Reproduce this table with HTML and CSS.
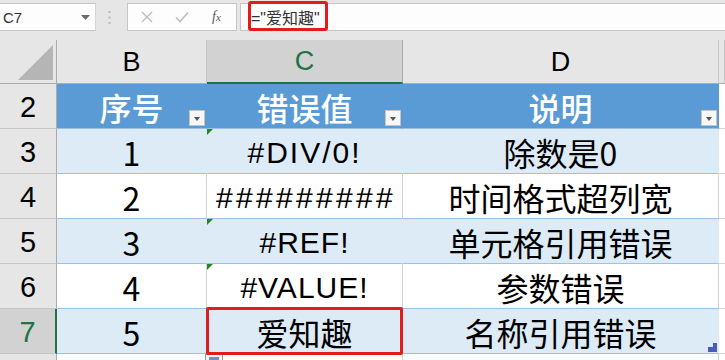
FILE: index.html
```html
<!DOCTYPE html>
<html lang="zh">
<head>
<meta charset="utf-8">
<link rel="stylesheet" href="styles.css">
</head>
<body>
<div class="app">
  <div class="fbar">
    <div class="namebox">
      <span class="nb-text">C7</span>
      <svg class="nb-arrow" width="9" height="5" viewBox="0 0 9 5"><path d="M0 0H9L4.5 5Z" fill="#6b6b6b"/></svg>
    </div>
    <div class="fb-dots">
      <svg width="3" height="13" viewBox="0 0 3 13"><rect x="0.5" y="0" width="2" height="2" fill="#b8b8b8"/><rect x="0.5" y="5.5" width="2" height="2" fill="#b8b8b8"/><rect x="0.5" y="11" width="2" height="2" fill="#b8b8b8"/></svg>
    </div>
    <div class="fxbox">
      <svg class="fx-icon" width="12" height="12" viewBox="0 0 12 12"><path d="M1 1L11 11M11 1L1 11" stroke="#bdbdbd" stroke-width="1.4" fill="none"/></svg>
      <svg class="fx-icon" width="14" height="12" viewBox="0 0 14 12"><path d="M1 6.5L5 10.5L13 1.5" stroke="#bdbdbd" stroke-width="1.6" fill="none"/></svg>
      <span class="fx-text">f<span class="fx-sub">x</span></span>
    </div>
    <div class="finput">
      <span class="formula">="爱知趣"</span>
      <div class="mark-formula"></div>
    </div>
  </div>

  <div class="sheet">
    <!-- column header row -->
    <div class="ch corner"><div class="corner-tri"></div></div>
    <div class="ch">B</div>
    <div class="ch sel">C</div>
    <div class="ch">D</div>
    <div class="ch"></div>

    <!-- row 2 -->
    <div class="rh">2</div>
    <div class="th">序号<span class="dd"></span></div>
    <div class="th">错误值<span class="dd"></span></div>
    <div class="th">说明<span class="dd"></span></div>
    <div class="ec ec-top"></div>

    <!-- row 3 -->
    <div class="rh">3</div>
    <div class="td band">1</div>
    <div class="td band latin wide">#DIV/0!<span class="err"></span></div>
    <div class="td band">除数是0</div>
    <div class="ec"></div>

    <!-- row 4 -->
    <div class="rh">4</div>
    <div class="td">2</div>
    <div class="td latin hashes">#########</div>
    <div class="td">时间格式超列宽</div>
    <div class="ec"></div>

    <!-- row 5 -->
    <div class="rh">5</div>
    <div class="td band">3</div>
    <div class="td band latin">#REF!<span class="err"></span></div>
    <div class="td band">单元格引用错误</div>
    <div class="ec"></div>

    <!-- row 6 -->
    <div class="rh">6</div>
    <div class="td">4</div>
    <div class="td latin">#VALUE!<span class="err"></span></div>
    <div class="td">参数错误</div>
    <div class="ec"></div>

    <!-- row 7 -->
    <div class="rh sel">7</div>
    <div class="td band">5</div>
    <div class="td band">爱知趣</div>
    <div class="td band">名称引用错误<span class="resize"></span></div>
    <div class="ec"></div>

    <!-- row 8 -->
    <div class="rh"></div>
    <div class="td"></div>
    <div class="td"><span class="qa"></span></div>
    <div class="td"></div>
    <div class="ec"></div>

    <div class="mark-cell"></div>
  </div>
</div>
</body>
</html>
```

FILE: styles.css
```css
* { box-sizing: border-box; }

html, body {
  margin: 0;
  padding: 0;
}

body {
  width: 725px;
  height: 360px;
  overflow: hidden;
  background: #e6e6e6;
  font-family: "Liberation Sans", "Noto Sans CJK SC", sans-serif;
  color: #000;
}

.app {
  display: flex;
  flex-direction: column;
}

/* ---------- formula bar ---------- */
.fbar {
  display: flex;
  height: 31px;
  padding-top: 3px;
  margin-bottom: 9px;
}

.namebox {
  width: 96px;
  height: 28px;
  background: #fdfdfd;
  border-top: 1px solid #c6c6c6;
  border-bottom: 1px solid #c6c6c6;
  border-right: 1px solid #d6d6d6;
  display: flex;
  align-items: center;
  justify-content: space-between;
  padding: 0 5px 0 3px;
}

.nb-text {
  font-family: "Liberation Sans", sans-serif;
  font-size: 15px;
  color: #333;
}

.fb-dots {
  width: 31px;
  height: 28px;
  display: flex;
  align-items: center;
  justify-content: center;
  padding-right: 4px;
}

.fxbox {
  width: 110px;
  height: 28px;
  background: #fdfdfd;
  border: 1px solid #c6c6c6;
  display: flex;
  align-items: center;
  padding-left: 13px;
  gap: 22px;
}

.fx-text {
  font-family: "Liberation Serif", serif;
  font-style: italic;
  font-size: 14px;
  color: #5a5a5a;
  margin-left: 1px;
}

.fx-sub {
  font-size: 11px;
}

.finput {
  position: relative;
  flex: 1;
  margin-left: 3px;
  height: 28px;
  background: #fdfdfd;
  border-top: 1px solid #c6c6c6;
  border-bottom: 1px solid #c6c6c6;
  border-left: 1px solid #c6c6c6;
  display: flex;
  align-items: center;
  padding-left: 10px;
}

.formula {
  font-family: "Liberation Sans", "Noto Sans CJK SC", sans-serif;
  font-size: 16px;
  color: #333;
}

.mark-formula {
  position: absolute;
  left: 7px;
  top: -3px;
  width: 80px;
  height: 30px;
  border: 3px solid #e41b1b;
  border-radius: 3px;
}

/* ---------- sheet ---------- */
.sheet {
  position: relative;
  display: grid;
  grid-template-columns: 57px 150px 196px 316px 6px;
  grid-template-rows: 44px repeat(6, 45px) 7px;
  background: #fff;
}

.ch {
  background: #e6e6e6;
  border-right: 1px solid #c6c6c6;
  border-bottom: 1px solid #ababab;
  display: flex;
  align-items: center;
  justify-content: center;
  font-size: 27px;
  color: #000;
  padding-top: 1px;
}

.ch.corner {
  position: relative;
  border-right: 1px solid #ababab;
}

.corner-tri {
  position: absolute;
  left: 18px;
  top: 5px;
  width: 35px;
  height: 35px;
  background: #b5b5b5;
  clip-path: polygon(100% 0, 100% 100%, 0 100%);
}

.ch.sel {
  background: #d2d2d2;
  color: #217346;
  border-bottom: 2px solid #217346;
  border-right: 1px solid #ababab;
}

.rh {
  background: #e6e6e6;
  border-right: 1px solid #ababab;
  border-bottom: 1px solid #c6c6c6;
  display: flex;
  align-items: center;
  justify-content: center;
  font-size: 29px;
  padding-top: 3px;
}

.rh.sel {
  background: #d2d2d2;
  color: #217346;
  border-right: 2px solid #217346;
}

.th {
  position: relative;
  background: #5b9bd5;
  color: #fff;
  border-bottom: 1px solid #9bc2e6;
  border-right: 1px solid #5b9bd5;
  display: flex;
  align-items: center;
  justify-content: center;
  font-family: "Noto Sans CJK SC", sans-serif;
  font-size: 32px;
  font-weight: 500;
  padding-top: 1px;
}

.dd {
  position: absolute;
  right: 1px;
  bottom: 2px;
  width: 16px;
  height: 16px;
  background: #f7f7f7;
  border: 1px solid #c4c4c4;
}

.dd::after {
  content: "";
  position: absolute;
  left: 4px;
  top: 6px;
  border-left: 3.5px solid transparent;
  border-right: 3.5px solid transparent;
  border-top: 4px solid #555;
}

.td {
  position: relative;
  background: #fff;
  border-bottom: 1px solid #9bc2e6;
  border-right: 1px solid #d4d4d4;
  display: flex;
  align-items: center;
  justify-content: center;
  font-family: "Noto Sans CJK SC", sans-serif;
  font-size: 32px;
  padding-top: 2px;
}

.td.band {
  background: #ddebf7;
  border-right-color: #ddebf7;
}

.td.latin {
  font-family: "Liberation Sans", sans-serif;
  font-size: 30px;
  letter-spacing: 1px;
  padding-top: 3px;
}

.td.latin.wide {
  letter-spacing: 2px;
}

.td.hashes {
  letter-spacing: 3.3px;
  padding-left: 3px;
}

.err {
  position: absolute;
  left: 0;
  top: 0;
  width: 0;
  height: 0;
  border-top: 6px solid #1f8a1f;
  border-right: 6px solid transparent;
}

.ec {
  background: #fff;
  border-bottom: 1px solid #d4d4d4;
}

.ec-top {
  border-bottom: 1px solid #d4d4d4;
}

.resize {
  position: absolute;
  right: 1px;
  bottom: 1px;
  width: 9px;
  height: 9px;
  background: #4a5cb8;
  clip-path: polygon(100% 0, 100% 100%, 0 100%, 0 45%, 55% 45%, 55% 0);
}

.qa {
  position: absolute;
  left: -2px;
  top: 0;
  width: 18px;
  height: 10px;
  background: #f4f4f4;
  border: 1px solid #9a9a9a;
}

.qa::after {
  content: "";
  position: absolute;
  left: 3px;
  top: 2px;
  width: 10px;
  height: 6px;
  background: #6f8fc9;
}

.mark-cell {
  position: absolute;
  left: 206px;
  top: 267px;
  width: 197px;
  height: 48px;
  border: 3px solid #e41b1b;
  border-radius: 2px;
  pointer-events: none;
}
```
